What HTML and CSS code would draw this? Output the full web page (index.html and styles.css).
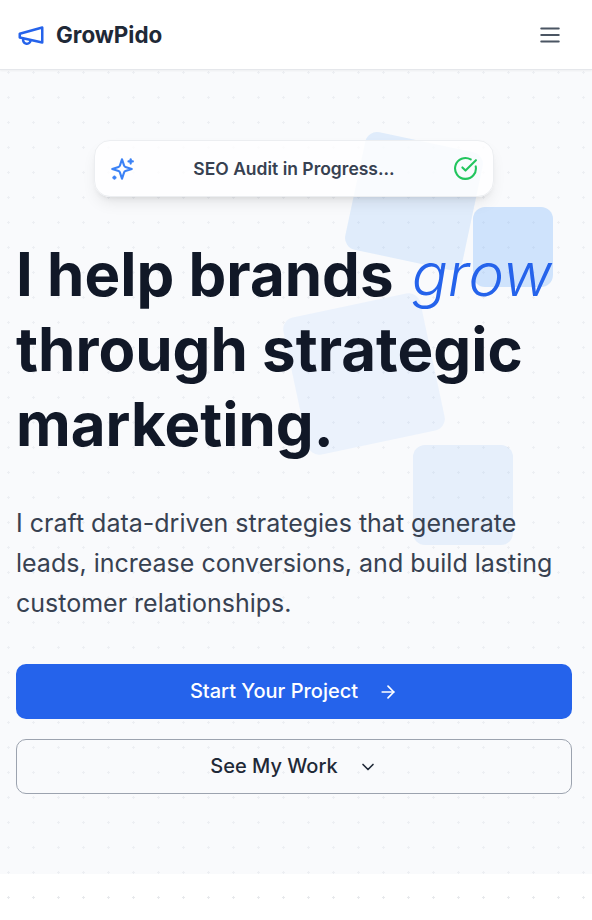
FILE: index.html
```html
<!DOCTYPE html>
<html lang="en">
<head>
  <meta charset="UTF-8">
  <meta name="viewport" content="width=device-width, initial-scale=1.0">
  <title>GrowPido</title>
  <link rel="stylesheet" href="styles.css">
</head>
<body>

<header class="topbar">
  <a class="brand" href="#">
    <svg class="brand-icon" viewBox="0 0 24 24" fill="none" stroke="currentColor" stroke-width="2" stroke-linecap="round" stroke-linejoin="round">
      <path d="m3 11 18-5v12L3 14v-3z"/>
      <path d="M11.6 16.8a3 3 0 1 1-5.8-1.6"/>
    </svg>
    <span>GrowPido</span>
  </a>
  <button class="menu-btn" aria-label="Menu">
    <svg viewBox="0 0 24 24" fill="none" stroke="currentColor" stroke-width="2" stroke-linecap="round" stroke-linejoin="round">
      <line x1="4" y1="6" x2="20" y2="6"/>
      <line x1="4" y1="12" x2="20" y2="12"/>
      <line x1="4" y1="18" x2="20" y2="18"/>
    </svg>
  </button>
</header>

<section class="hero">
  <div class="shape shape-a"></div>
  <div class="shape shape-b"></div>
  <div class="shape shape-c"></div>
  <div class="shape shape-d"></div>

  <div class="hero-content">
    <div class="status-card">
      <svg class="status-spark" viewBox="0 0 24 24" fill="none" stroke="currentColor" stroke-width="2" stroke-linecap="round" stroke-linejoin="round">
        <path d="m12 3-1.9 5.8a2 2 0 0 1-1.3 1.3L3 12l5.8 1.9a2 2 0 0 1 1.3 1.3L12 21l1.9-5.8a2 2 0 0 1 1.3-1.3L21 12l-5.8-1.9a2 2 0 0 1-1.3-1.3L12 3Z"/>
        <path d="M20 3v4"/>
        <path d="M22 5h-4"/>
        <path d="M5 19v2"/>
        <path d="M6 20H4"/>
      </svg>
      <span class="status-text">SEO Audit in Progress...</span>
      <svg class="status-check" viewBox="0 0 24 24" fill="none" stroke="currentColor" stroke-width="2" stroke-linecap="round" stroke-linejoin="round">
        <path d="M21.8 10A10 10 0 1 1 17 3.3"/>
        <path d="m9 11 3 3L22 4"/>
      </svg>
    </div>

    <h1>I help brands <em>grow</em> through strategic marketing.</h1>

    <p class="lead">I craft data-driven strategies that generate leads, increase conversions, and build lasting customer relationships.</p>

    <div class="actions">
      <a class="btn btn-primary" href="#">
        <span>Start Your Project</span>
        <svg viewBox="0 0 24 24" fill="none" stroke="currentColor" stroke-width="2" stroke-linecap="round" stroke-linejoin="round">
          <path d="M5 12h14"/>
          <path d="m12 5 7 7-7 7"/>
        </svg>
      </a>
      <a class="btn btn-outline" href="#">
        <span>See My Work</span>
        <svg viewBox="0 0 24 24" fill="none" stroke="currentColor" stroke-width="2" stroke-linecap="round" stroke-linejoin="round">
          <path d="m6 9 6 6 6-6"/>
        </svg>
      </a>
    </div>
  </div>
</section>

</body>
</html>
```

FILE: styles.css
```css
* {
  box-sizing: border-box;
}
html, body {
  height: 100%;
}
body {
  margin: 0;
  font-family: Inter, "Liberation Sans", sans-serif;
  color: #111827;
  background-color: #fff;
  background-image: url("data:image/svg+xml,%3Csvg xmlns='http://www.w3.org/2000/svg' width='25' height='25'%3E%3Cpath fill='%23e7e9ec' d='M1 0h1v1h1v1H2v1H1V2H0V1h1z'/%3E%3C/svg%3E");
  background-position: 7px 21px;
}
.topbar {
  height: 70px;
  padding: 0 20px 0 16px;
  display: flex;
  align-items: center;
  justify-content: space-between;
  background-color: #fff;
  border-bottom: 1px solid #e5e7eb;
  box-shadow: 0 1px 2px rgba(0, 0, 0, 0.05);
  position: relative;
  z-index: 2;
}
.brand {
  display: flex;
  align-items: center;
  gap: 10px;
  color: #1f2937;
  font-size: 22.4px;
  font-weight: 700;
  text-decoration: none;
}
.brand-icon {
  width: 30px;
  height: 30px;
  color: #2563eb;
}
.menu-btn {
  width: 44px;
  height: 44px;
  padding: 9px;
  background: none;
  border: none;
  color: #4b5563;
}
.menu-btn svg {
  display: block;
  width: 26px;
  height: 26px;
}
.hero {
  position: relative;
  height: 804px;
  padding: 70px 20px 0 16px;
  overflow: hidden;
  background-color: rgba(243, 246, 250, 0.5);
}
.hero-content {
  position: relative;
}
.shape {
  position: absolute;
  border-radius: 12px;
  background-color: #60a5fa;
}
.shape-a {
  left: 354px;
  top: 71px;
  width: 120px;
  height: 120px;
  opacity: 0.16;
  transform: rotate(12deg);
}
.shape-b {
  left: 473px;
  top: 137px;
  width: 80px;
  height: 80px;
  opacity: 0.27;
}
.shape-c {
  left: 294px;
  top: 234px;
  width: 140px;
  height: 140px;
  opacity: 0.09;
  transform: rotate(-12deg);
}
.shape-d {
  left: 413px;
  top: 375px;
  width: 100px;
  height: 100px;
  opacity: 0.12;
}
.status-card {
  width: 400px;
  height: 57px;
  margin: 0 auto 40px;
  padding: 0 15px 0 14px;
  display: flex;
  align-items: center;
  justify-content: space-between;
  background-color: rgba(255, 255, 255, 0.8);
  border: 1px solid #eceef1;
  border-radius: 16px;
  box-shadow: 0 8px 16px -4px rgba(0, 0, 0, 0.1), 0 4px 6px -4px rgba(0, 0, 0, 0.1);
}
.status-spark {
  width: 26px;
  height: 26px;
  color: #3b82f6;
}
.status-check {
  width: 25px;
  height: 25px;
  color: #22c55e;
}
.status-text {
  font-size: 17.5px;
  font-weight: 600;
  color: #374151;
}
h1 {
  margin: 0 0 41px;
  font-size: 60px;
  line-height: 75px;
  font-weight: 700;
  color: #111827;
}
h1 em {
  padding-left: 4px;
  font-weight: 300;
  color: #2563eb;
}
.lead {
  margin: 0 0 41px;
  font-size: 25px;
  line-height: 40px;
  color: #374151;
}
.actions {
  display: flex;
  flex-direction: column;
  gap: 20px;
}
.btn {
  height: 55px;
  display: flex;
  align-items: center;
  justify-content: center;
  gap: 20px;
  border-radius: 10px;
  font-size: 20px;
  font-weight: 500;
  text-decoration: none;
}
.btn span {
  margin-top: -2px;
}
.btn svg {
  width: 20px;
  height: 20px;
}
.btn-primary {
  background-color: #2563eb;
  color: #fff;
}
.btn-outline {
  border: 1px solid #9ca3af;
  color: #1f2937;
}
```
